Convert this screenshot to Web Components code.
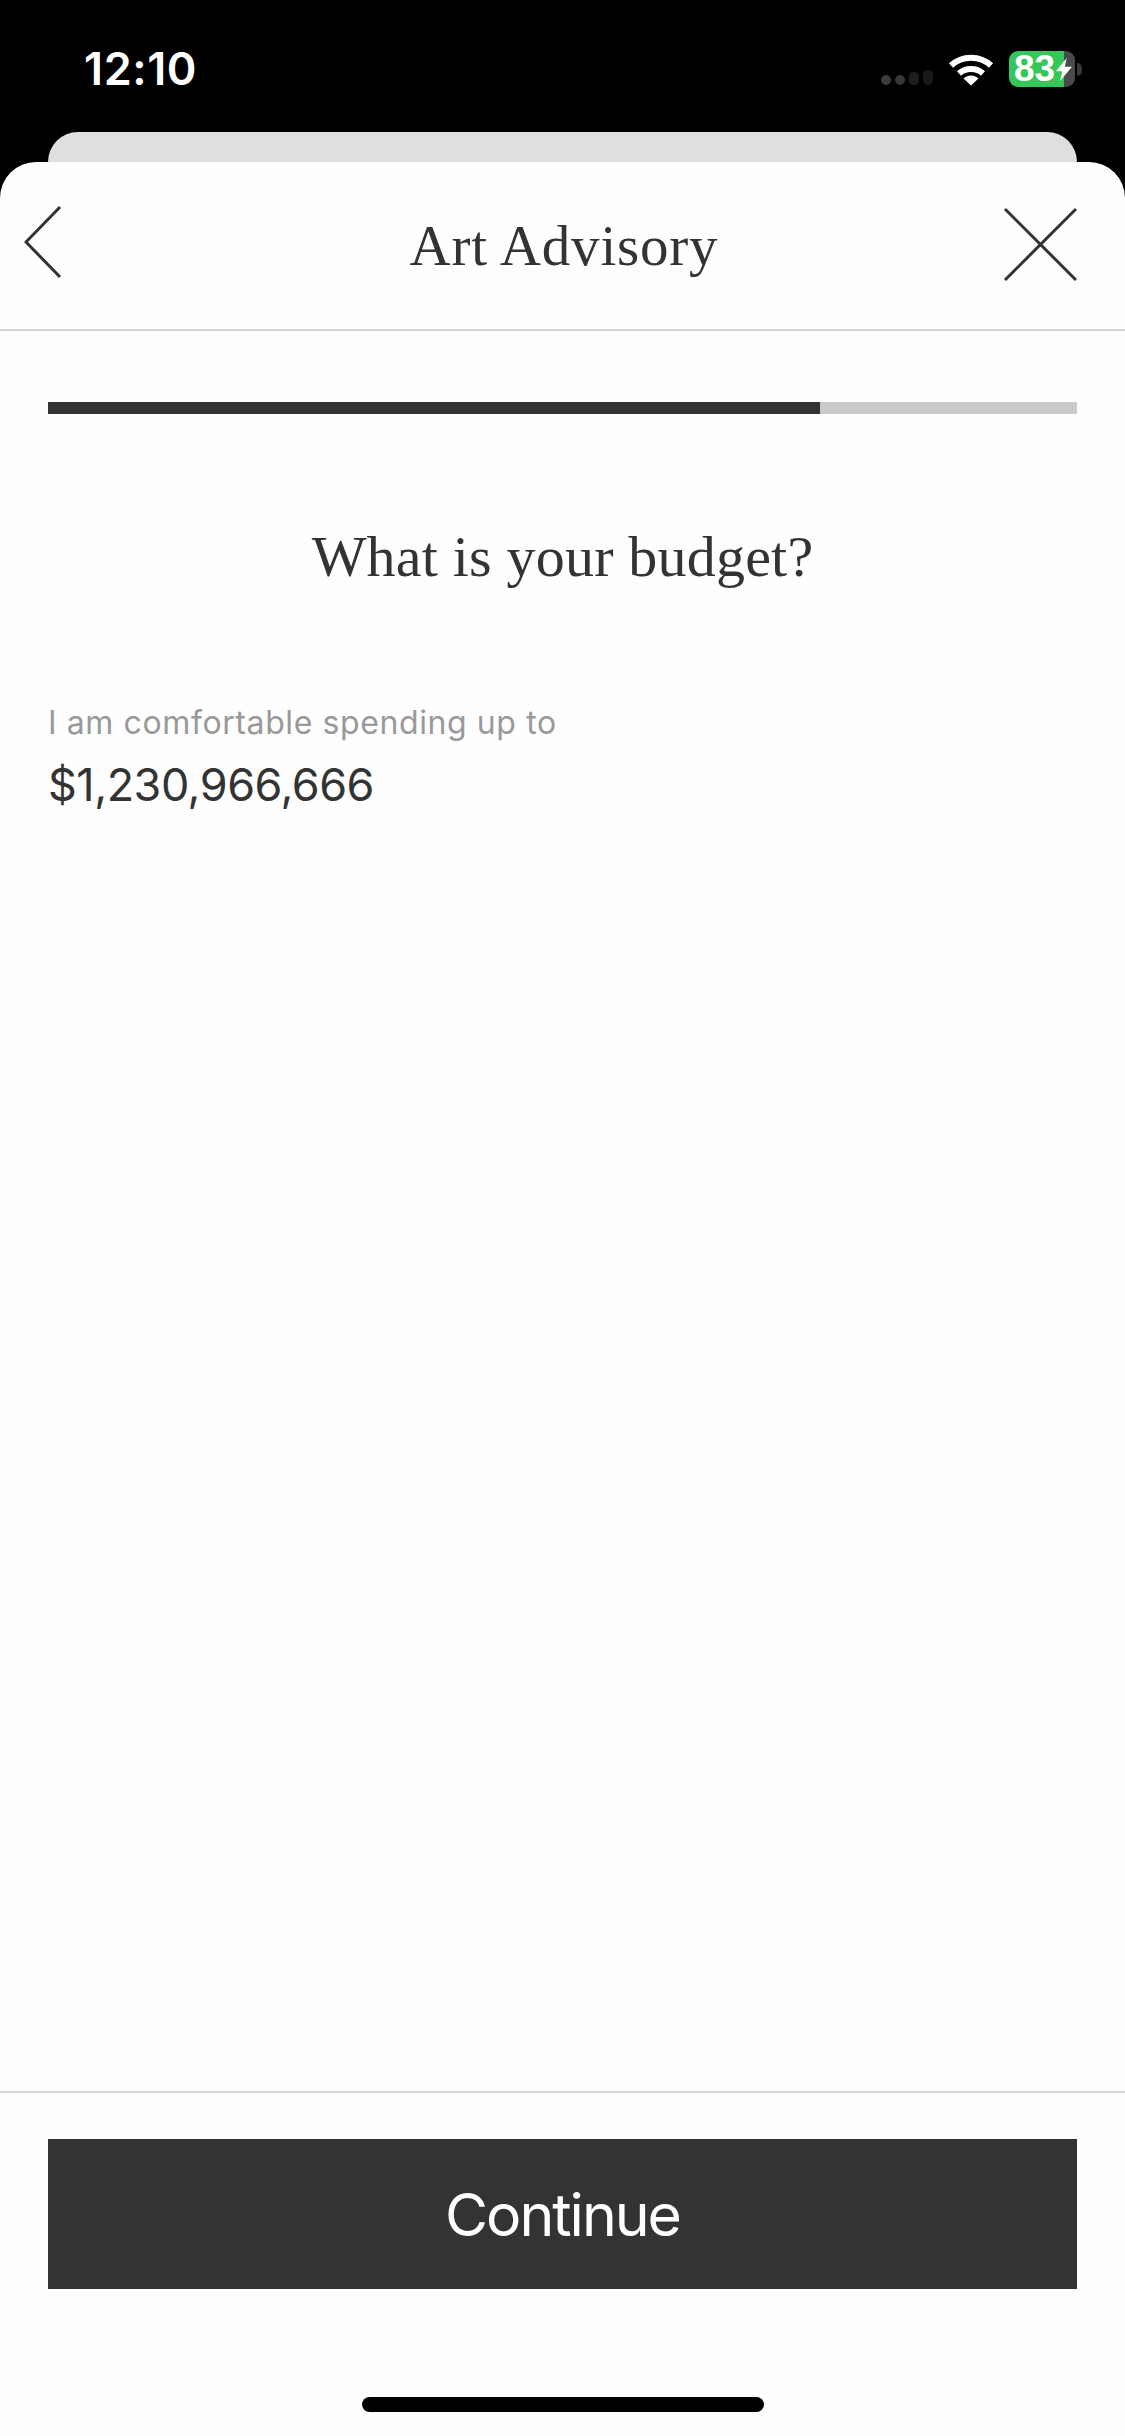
<!DOCTYPE html>
<html>
<head>
<meta charset="utf-8">
<title>Art Advisory</title>
<style>
  html, body { margin: 0; height: 100%; background: #000; }
</style>
</head>
<body>
<advisory-screen>
  <status-bar slot="top" time="12:10" battery="83"></status-bar>
  <nav-header slot="sheet" name="Art Advisory"></nav-header>
  <step-progress slot="sheet" value="75"></step-progress>
  <budget-question slot="sheet" question="What is your budget?" label="I am comfortable spending up to" amount="$1,230,966,666"></budget-question>
  <continue-footer slot="sheet" name="Continue"></continue-footer>
</advisory-screen>

<script>
class AdvisoryScreen extends HTMLElement {
  constructor(){
    super();
    this.attachShadow({mode: 'open'});
    this.shadowRoot.innerHTML = `
      <style>
      :host { display: flex; flex-direction: column; width: 1125px; height: 2436px; background: #000; overflow: hidden; }
      .peek { height: 30px; margin: 0 48px; background: #dfdfdf; border-radius: 30px 30px 0 0; flex: none; }
      .sheet { flex: 1; display: flex; flex-direction: column; background: #fefefe; border-radius: 36px 36px 0 0; min-height: 0; }
      </style>
      <slot name="top"></slot>
      <div class="peek"></div>
      <div class="sheet"><slot name="sheet"></slot></div>`;
  }
}

class StatusBar extends HTMLElement {
  constructor(){
    super();
    this.attachShadow({mode: 'open'});
    this.shadowRoot.innerHTML = `
      <style>
      :host { display: flex; justify-content: space-between; height: 132px; flex: none; padding: 0 43px 0 84px; box-sizing: border-box; }
      .time { color: #fff; font: 600 45px/45px Inter, sans-serif; letter-spacing: 0.6px; margin-top: 46px; }
      .icons { display: flex; align-items: flex-start; padding-top: 50px; }
      .signal { margin: 19px 15px 0 0; }
      .wifi { margin: 2px 15px 0 0; }
      .battery { position: relative; width: 66px; height: 36px; margin-top: 1px; border-radius: 9px;
        background: linear-gradient(90deg, #35c759 0 55px, #4a4a4a 55px); }
      .battery span { display: block; color: #fff; font: 700 37px/36px "Liberation Sans", sans-serif; padding-left: 5px; }
      .bolt { position: absolute; left: 47px; top: 6px; }
      .nub { width: 5px; height: 13px; margin: 13px 0 0 2px; background: #3a3a3a; border-radius: 0 6px 6px 0; }
      </style>
      <div class="time">${this.getAttribute("time")}</div>
      <div class="icons">
        <svg class="signal" width="52" height="16" viewBox="0 0 52 16">
          <circle cx="5" cy="11" r="5" fill="#3c3c3c"/>
          <circle cx="19" cy="11" r="5" fill="#363636"/>
          <rect x="28" y="3" width="10" height="13" rx="4.500" fill="#1e1e1e"/>
          <rect x="42" y="1" width="10" height="15" rx="4.500" fill="#181818"/>
        </svg>
        <svg class="wifi" width="46" height="34" viewBox="0 0 46 34">
          <path d="M3 13.500C14 3 32 3 43 13.500" fill="none" stroke="#fff" stroke-width="6"/>
          <path d="M11 21.500C17.500 15.500 28.500 15.500 35 21.500" fill="none" stroke="#fff" stroke-width="6"/>
          <path d="M15.500 26.500C20 22.500 26 22.500 30.500 26.500L23 33.500Z" fill="#fff"/>
        </svg>
        <div class="battery">
          <span>${this.getAttribute("battery")}</span>
          <svg class="bolt" width="16" height="25" viewBox="0 0 18 26"><path d="M12 0L0 15H7L4.500 26L18 10H10Z" fill="#fff"/></svg>
        </div>
        <div class="nub"></div>
      </div>`;
  }
}

class NavHeader extends HTMLElement {
  constructor(){
    super();
    this.attachShadow({mode: 'open'});
    this.shadowRoot.innerHTML = `
      <style>
      :host { display: grid; grid-template-columns: 1fr auto 1fr; align-items: center; height: 169px; flex: none; box-sizing: border-box;
        border-bottom: 2px solid #d4d4d4; padding: 0 48px 0 48px; color: #333; }
      .title { font: 400 57px/1 "Liberation Serif", serif; letter-spacing: 0.8px; margin-left: 3px; }
      .back { justify-self: start; margin: -8px 0 0 -24px; }
      .close { justify-self: end; margin-top: -4px; }
      svg { display: block; }
      </style>
      <svg class="back" width="38" height="74" viewBox="0 0 38 74"><path d="M36 2L2 37L36 72" fill="none" stroke="#333" stroke-width="3"/></svg>
      <div class="title">${this.getAttribute("name")}</div>
      <svg class="close" width="74" height="74" viewBox="0 0 74 74"><path d="M2 2L73 73M73 2L2 73" fill="none" stroke="#333" stroke-width="3"/></svg>`;
  }
}

class StepProgress extends HTMLElement {
  constructor(){
    super();
    this.attachShadow({mode: 'open'});
    this.shadowRoot.innerHTML = `
      <style>
      :host { display: block; flex: none; margin: 71px 48px 0; height: 12px; background: #c9c9c9; }
      .fill { height: 100%; background: #333; }
      </style>
      <div class="fill" style="width: ${this.getAttribute("value")}%"></div>`;
  }
}

class BudgetQuestion extends HTMLElement {
  constructor(){
    super();
    this.attachShadow({mode: 'open'});
    this.shadowRoot.innerHTML = `
      <style>
      :host { display: flex; flex-direction: column; flex: 1; min-height: 0; padding: 0 48px; }
      h1 { margin: 108px 0 0; text-align: center; color: #333; font: 400 58px/70px "Liberation Serif", serif; letter-spacing: 0.2px; }
      .label { margin-top: 111px; color: #999; font: 400 32px/40px Inter, sans-serif; letter-spacing: 0.6px; }
      .amount { margin-top: 15px; color: #333; font: 400 45px/54px Inter, sans-serif; letter-spacing: -0.5px; }
      </style>
      <h1>${this.getAttribute("question")}</h1>
      <div class="label">${this.getAttribute("label")}</div>
      <div class="amount">${this.getAttribute("amount")}</div>`;
  }
}

class ContinueFooter extends HTMLElement {
  constructor(){
    super();
    this.attachShadow({mode: 'open'});
    this.shadowRoot.innerHTML = `
      <style>
      :host { display: flex; flex-direction: column; flex: none; border-top: 2px solid #d4d4d4; padding: 46px 48px 24px; }
      button { display: block; width: 100%; height: 150px; border: 0; padding: 0; border-radius: 0; background: #333; color: #fff;
        font: 400 59px/1 Inter, sans-serif; letter-spacing: -2px; }
      .home { width: 402px; height: 15px; margin: 108px auto 0; background: #000; border-radius: 8px; }
      </style>
      <button>${this.getAttribute("name")}</button>
      <div class="home"></div>`;
  }
}

window.customElements.define('advisory-screen', AdvisoryScreen);
window.customElements.define('status-bar', StatusBar);
window.customElements.define('nav-header', NavHeader);
window.customElements.define('step-progress', StepProgress);
window.customElements.define('budget-question', BudgetQuestion);
window.customElements.define('continue-footer', ContinueFooter);
</script>
</body>
</html>
